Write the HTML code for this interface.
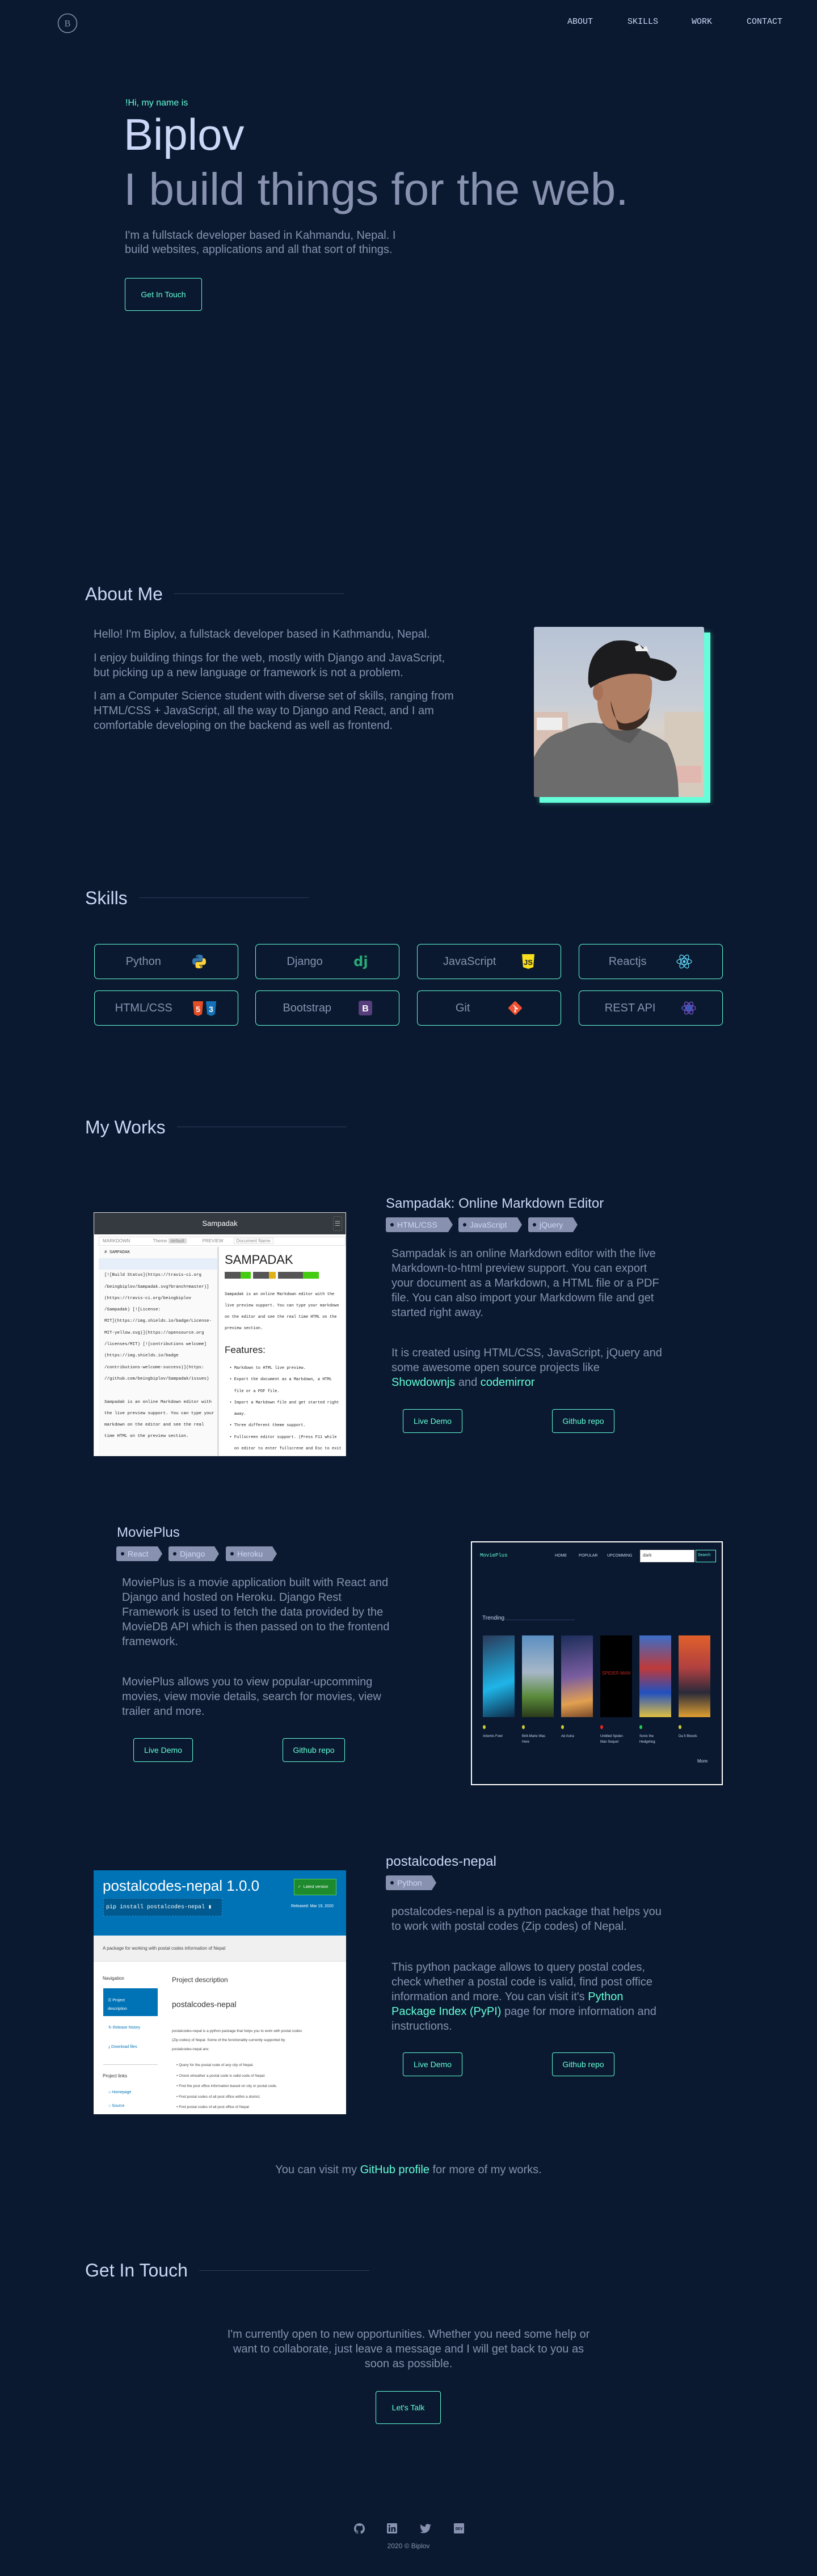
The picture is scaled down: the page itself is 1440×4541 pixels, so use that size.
<!DOCTYPE html>
<html><head><meta charset="utf-8">
<style>
*{margin:0;padding:0;box-sizing:border-box}
body{width:1440px;height:4541px;background:#0a192f;font-family:"Liberation Sans",Arial,sans-serif;color:#8892b0;position:relative;overflow:hidden}
.a{position:absolute;white-space:nowrap}
.nav{font-family:"Liberation Mono",monospace;font-size:15px;color:#ccd6f6;top:30px}
.h2{font-size:32px;color:#ccd6f6;line-height:40px}
.hl{position:absolute;height:1px;background:#2d3d5c}
.p{font-size:20px;line-height:26px;color:#8892b0}
.btn{position:absolute;border:1px solid #64ffda;border-radius:4px;color:#64ffda;font-size:14px;display:flex;align-items:center;justify-content:center}
.card{position:absolute;width:254px;height:62px;border:1px solid #64ffda;border-radius:7px;display:flex;align-items:center;justify-content:space-evenly;font-size:20px;color:#8892b0}
.title{font-size:24px;color:#ccd6f6;line-height:30px}
.tag{position:absolute;height:26px;background:#8892b0;color:#ccd6f6;font-size:14px;line-height:26px;padding-left:20px;border-radius:3px 0 0 3px;clip-path:polygon(0 0,calc(100% - 8px) 0,100% 50%,calc(100% - 8px) 100%,0 100%)}
.tag:before{content:"";position:absolute;left:8px;top:10px;width:6px;height:6px;border-radius:50%;background:#0a192f}
.lk{color:#64ffda}
.mono{font-family:"Liberation Mono",monospace}
</style></head><body>

<!-- NAV -->
<svg class="a" style="left:101px;top:23px" width="36" height="36" viewBox="0 0 36 36"><circle cx="18" cy="18" r="16.5" fill="none" stroke="#8892b0" stroke-width="1.5"/><text x="18" y="23.5" text-anchor="middle" font-family="Liberation Serif,serif" font-size="16" fill="#8892b0">B</text></svg>
<div class="a nav" style="left:1000px">ABOUT</div>
<div class="a nav" style="left:1106px">SKILLS</div>
<div class="a nav" style="left:1219px">WORK</div>
<div class="a nav" style="left:1316px">CONTACT</div>

<!-- HERO -->
<div class="a" style="left:221px;top:172px;font-size:16px;color:#64ffda;line-height:20px">!Hi, my name is</div>
<div class="a" style="left:218px;top:198px;font-size:78px;line-height:78px;color:#ccd6f6">Biplov</div>
<div class="a" style="left:218px;top:294px;font-size:80px;line-height:80px;color:#8892b0">I build things for the web.</div>
<div class="a p" style="left:220px;top:403px;line-height:25px">I'm a fullstack developer based in Kahmandu, Nepal. I<br>build websites, applications and all that sort of things.</div>
<div class="btn" style="left:220px;top:490px;width:136px;height:58px">Get In Touch</div>

<!-- ABOUT -->
<div class="a h2" style="left:150px;top:1027px">About Me</div>
<div class="hl" style="left:307px;top:1046px;width:299px"></div>
<div class="a p" style="left:165px;top:1105px">Hello! I'm Biplov, a fullstack developer based in Kathmandu, Nepal.</div>
<div class="a p" style="left:165px;top:1147px">I enjoy building things for the web, mostly with Django and JavaScript,<br>but picking up a new language or framework is not a problem.</div>
<div class="a p" style="left:165px;top:1214px">I am a Computer Science student with diverse set of skills, ranging from<br>HTML/CSS + JavaScript, all the way to Django and React, and I am<br>comfortable developing on the backend as well as frontend.</div>
<div class="a" style="left:951px;top:1115px;width:301px;height:300px;background:#64ffda;box-shadow:0 0 8px rgba(100,255,218,.5)"></div>
<svg class="a" style="left:941px;top:1105px;border-radius:3px" width="300" height="300" viewBox="0 0 300 300">
<defs><linearGradient id="sky" x1="0" y1="0" x2="0" y2="1"><stop offset="0" stop-color="#b7c3d6"/><stop offset=".45" stop-color="#c9ced6"/><stop offset=".6" stop-color="#d8d2cc"/><stop offset="1" stop-color="#c8b8ae"/></linearGradient></defs>
<rect width="300" height="300" fill="url(#sky)"/>
<rect x="0" y="150" width="60" height="80" fill="#d8c0b4"/><rect x="5" y="160" width="45" height="22" fill="#eeeeee"/>
<rect x="230" y="150" width="70" height="150" fill="#d6cabd"/><rect x="245" y="245" width="50" height="30" fill="#e0b8b0"/>
<path d="M0 300 L0 230 Q20 190 50 185 Q90 165 115 170 L160 175 Q200 180 235 205 Q255 240 255 300 Z" fill="#6c6c6c"/>
<path d="M120 170 Q140 200 170 205 L190 180 Z" fill="#5a5a5a"/>
<path d="M112 120 Q110 170 135 180 Q170 190 195 160 Q210 135 208 95 L200 80 L120 80 Z" fill="#b07e62"/>
<path d="M135 130 Q140 175 165 170 Q195 165 205 140 L200 160 Q180 190 150 180 Z" fill="#3a2a22"/>
<ellipse cx="113" cy="115" rx="9" ry="15" fill="#a87258"/>
<path d="M96 100 Q92 40 140 25 Q190 18 205 55 Q240 60 252 78 Q250 98 225 95 L200 85 Q150 75 100 108 Z" fill="#1c1c1e"/>
<path d="M178 35 l8 -4 l6 8 l6 -6 l4 10 l-22 0z" fill="#eee"/>
</svg>

<!-- SKILLS -->
<div class="a h2" style="left:150px;top:1563px">Skills</div>
<div class="hl" style="left:245px;top:1582px;width:299px"></div>

<div class="card" style="left:166px;top:1664px"><span>Python</span>
<svg width="26" height="26" viewBox="0 0 26 26"><path d="M12.8 1C7 1 7.4 3.5 7.4 3.5V6h5.6v1H5.2S1 6.6 1 12.8s3.6 6 3.6 6h2.2V16s-.1-3.6 3.6-3.6h5.5s3.4.1 3.4-3.3V3.6S19.8 1 12.8 1zM9.7 2.8a1 1 0 110 2 1 1 0 010-2z" fill="#3776ab"/><path d="M13.2 25c5.8 0 5.4-2.5 5.4-2.5V20H13v-1h7.8s4.2.4 4.2-5.8-3.6-6-3.6-6h-2.2V10s.1 3.6-3.6 3.6H10s-3.4-.1-3.4 3.3v5.5S6.2 25 13.2 25zm3.1-1.8a1 1 0 110-2 1 1 0 010 2z" fill="#ffd43b"/></svg></div>
<div class="card" style="left:450px;top:1664px"><span>Django</span><span style="color:#2ba977;font-weight:bold;font-size:24px;font-family:'DejaVu Sans',sans-serif">dj</span></div>
<div class="card" style="left:735px;top:1664px"><span>JavaScript</span>
<svg width="24" height="28" viewBox="0 0 24 28"><path d="M1 1h22l-2 23-9 3-9-3z" fill="#f7df1e"/><text x="12" y="20" text-anchor="middle" font-family="Liberation Sans" font-weight="bold" font-size="13" fill="#222">JS</text></svg></div>
<div class="card" style="left:1020px;top:1664px"><span>Reactjs</span>
<svg width="30" height="30" viewBox="-15 -15 30 30"><g fill="none" stroke="#61dafb" stroke-width="1.3"><ellipse rx="13" ry="5"/><ellipse rx="13" ry="5" transform="rotate(60)"/><ellipse rx="13" ry="5" transform="rotate(120)"/></g><circle r="2.4" fill="#61dafb"/></svg></div>

<div class="card" style="left:166px;top:1746px"><span>HTML/CSS</span>
<svg width="44" height="30" viewBox="0 0 44 30"><path d="M1 3h18l-2 23-7 3-7-3z" fill="#e44d26"/><text x="10" y="22" text-anchor="middle" font-family="Liberation Sans" font-weight="bold" font-size="14" fill="#fff">5</text><path d="M24 3h18l-2 23-7 3-7-3z" fill="#1572b6"/><text x="33" y="22" text-anchor="middle" font-family="Liberation Sans" font-weight="bold" font-size="14" fill="#fff">3</text></svg></div>
<div class="card" style="left:450px;top:1746px"><span>Bootstrap</span>
<svg width="24" height="26" viewBox="0 0 24 26"><rect width="24" height="26" rx="4" fill="#563d7c"/><text x="12" y="19" text-anchor="middle" font-family="Liberation Sans" font-weight="bold" font-size="16" fill="#fff">B</text></svg></div>
<div class="card" style="left:735px;top:1746px"><span>Git</span>
<svg width="26" height="26" viewBox="0 0 26 26"><rect x="4" y="4" width="18" height="18" transform="rotate(45 13 13)" rx="2" fill="#f05133"/><path d="M10 8l6 6M13 11v8" stroke="#fff" stroke-width="1.5"/><circle cx="13" cy="19" r="1.6" fill="#fff"/><circle cx="16" cy="14" r="1.6" fill="#fff"/></svg></div>
<div class="card" style="left:1020px;top:1746px"><span>REST API</span>
<svg width="28" height="30" viewBox="-14 -15 28 30"><g fill="none" stroke="#6b4fc2" stroke-width="1.5"><ellipse rx="12" ry="5"/><ellipse rx="12" ry="5" transform="rotate(60)"/><ellipse rx="12" ry="5" transform="rotate(120)"/></g><circle r="5" fill="#3a57b4"/></svg></div>

<!-- WORKS -->
<div class="a h2" style="left:150px;top:1967px">My Works</div>
<div class="hl" style="left:312px;top:1986px;width:299px"></div>

<!-- Project 1 image -->
<div class="a" style="left:165px;top:2137px;width:445px;height:430px;background:#fff;overflow:hidden;border:1px solid #ddd">
 <div style="height:38px;background:#343a40;color:#fff;font-size:13px;text-align:center;line-height:38px;position:relative">Sampadak<span style="position:absolute;right:6px;top:6px;width:16px;height:26px;border:1px solid #555;border-radius:3px;color:#aaa;line-height:24px;font-size:12px">☰</span></div>
 <div style="position:absolute;top:42px;left:8px;right:0;height:16px;border:1px solid #ddd;font-size:8px;color:#888;line-height:14px"><span style="margin-left:6px">MARKDOWN</span><span style="margin-left:40px">Theme <span style="background:#ddd;padding:0 4px">default</span></span><span style="margin-left:28px">PREVIEW</span><span style="margin-left:18px;border:1px solid #ddd;padding:0 4px">Document Name</span></div>
 <div class="mono" style="position:absolute;top:60px;left:8px;width:212px;bottom:0;background:#fafafa;border-right:3px solid #ddd;font-size:7.5px;line-height:20.3px;color:#222;padding-left:10px;white-space:pre"># SAMPADAK
<span style="display:block;background:#e6eef9;margin-left:-10px;height:20px"></span>[![Build Status](https://travis-ci.org
/beingbiplov/Sampadak.svg?branch=master)]
(https://travis-ci.org/beingbiplov
/Sampadak) [![License:
MIT](https://img.shields.io/badge/License-
MIT-yellow.svg)](https://opensource.org
/licenses/MIT) [![contributions welcome]
(https://img.shields.io/badge
/contributions-welcome-success)](https:
//github.com/beingbiplov/Sampadak/issues)

Sampadak is an online Markdown editor with
the live preview support. You can type your
markdown on the editor and see the real
time HTML on the preview section.</div>
 <div style="position:absolute;top:60px;left:224px;right:4px;bottom:0;padding-left:6px;color:#222">
  <div style="font-size:22px;margin-top:10px;font-family:'Liberation Sans Narrow','Liberation Sans',sans-serif">SAMPADAK</div>
  <div style="margin-top:8px;height:12px;display:flex;gap:4px"><span style="width:46px;background:#555;border-right:18px solid #4c1"></span><span style="width:40px;background:#555;border-right:12px solid #dfb317"></span><span style="width:72px;background:#555;border-right:28px solid #4c1"></span></div>
  <div class="mono" style="font-size:7px;line-height:20px;margin-top:18px;white-space:pre">Sampadak is an online Markdown editor with the
live preview support. You can type your markdown
on the editor and see the real time HTML on the
preview section.</div>
  <div style="font-size:17px;margin-top:18px">Features:</div>
  <div class="mono" style="font-size:7px;line-height:20.3px;margin-top:12px;white-space:pre">  • Markdown to HTML live preview.
  • Export the document as a Markdown, a HTML
    file or a PDF file.
  • Import a Markdown file and get started right
    away.
  • Three different theme support.
  • Fullscreen editor support. (Press F11 while
    on editor to enter fullscrene and Esc to exit
    out)</div>
 </div>
</div>
<div class="a title" style="left:680px;top:2107px">Sampadak: Online Markdown Editor</div>
<div class="tag" style="left:680px;top:2146px;width:118px">HTML/CSS</div>
<div class="tag" style="left:808px;top:2146px;width:112px">JavaScript</div>
<div class="tag" style="left:931px;top:2146px;width:87px">jQuery</div>
<div class="a p" style="left:690px;top:2197px">Sampadak is an online Markdown editor with the live<br>Markdown-to-html preview support. You can export<br>your document as a Markdown, a HTML file or a PDF<br>file. You can also import your Markdowm file and get<br>started right away.</div>
<div class="a p" style="left:690px;top:2372px">It is created using HTML/CSS, JavaScript, jQuery and<br>some awesome open source projects like<br><span class="lk">Showdownjs</span> and <span class="lk">codemirror</span></div>
<div class="btn" style="left:710px;top:2484px;width:105px;height:42px">Live Demo</div>
<div class="btn" style="left:973px;top:2484px;width:110px;height:42px">Github repo</div>

<!-- Project 2 -->
<div class="a title" style="left:206px;top:2687px">MoviePlus</div>
<div class="tag" style="left:205px;top:2726px;width:81px">React</div>
<div class="tag" style="left:297px;top:2726px;width:89px">Django</div>
<div class="tag" style="left:398px;top:2726px;width:90px">Heroku</div>
<div class="a p" style="left:215px;top:2777px">MoviePlus is a movie application built with React and<br>Django and hosted on Heroku. Django Rest<br>Framework is used to fetch the data provided by the<br>MovieDB API which is then passed on to the frontend<br>framework.</div>
<div class="a p" style="left:215px;top:2952px">MoviePlus allows you to view popular-upcomming<br>movies, view movie details, search for movies, view<br>trailer and more.</div>
<div class="btn" style="left:235px;top:3064px;width:105px;height:42px">Live Demo</div>
<div class="btn" style="left:498px;top:3064px;width:110px;height:42px">Github repo</div>
<div class="a" style="left:830px;top:2717px;width:444px;height:430px;background:#0a192f;border:2px solid #fff;overflow:hidden">
 <div class="a mono" style="left:14px;top:18px;font-size:9px;color:#64ffda">MoviePlus</div>
 <div class="a" style="left:146px;top:20px;font-size:7px;color:#ccd6f6">HOME</div>
 <div class="a" style="left:188px;top:20px;font-size:7px;color:#ccd6f6">POPULAR</div>
 <div class="a" style="left:238px;top:20px;font-size:7px;color:#ccd6f6">UPCOMMING</div>
 <div class="a" style="left:296px;top:13px;width:96px;height:22px;background:#fff;border:1px solid #ccc;font-size:8px;color:#444;padding:4px">dark</div>
 <div class="a" style="left:394px;top:13px;width:36px;height:22px;border:1px solid #64ffda;font-size:7px;color:#64ffda;padding:5px 3px">Search</div>
 <div class="a" style="left:18px;top:128px;font-size:10px;color:#ccd6f6">Trending</div>
 <div class="a" style="left:55px;top:136px;width:126px;height:1px;background:#2d3d5c"></div>
 <div class="a" style="left:19px;top:164px;width:56px;height:144px;background:linear-gradient(160deg,#2a3a5a,#1fb5e8 60%,#0d2a48)"></div>
 <div class="a" style="left:88px;top:164px;width:56px;height:144px;background:linear-gradient(180deg,#5b8fc2,#a7b7c8 45%,#5a8a3a 75%,#2a3a1a)"></div>
 <div class="a" style="left:157px;top:164px;width:56px;height:144px;background:linear-gradient(170deg,#1c2e5a,#7a5da0 50%,#e2a050 80%,#7a4a2a)"></div>
 <div class="a" style="left:226px;top:164px;width:56px;height:144px;background:#000"><div style="color:#c22;font-size:8px;text-align:center;margin-top:62px">SPIDER-MAN</div></div>
 <div class="a" style="left:295px;top:164px;width:56px;height:144px;background:linear-gradient(180deg,#3a6ec8,#c03a3a 40%,#2050c0 70%,#e0c040)"></div>
 <div class="a" style="left:364px;top:164px;width:56px;height:144px;background:linear-gradient(180deg,#e0602a,#b04040 40%,#2a2a3a 70%,#e0a030)"></div>
 <div class="a" style="left:19px;top:337px;font-size:6px;color:#ccd6f6;line-height:10px">Artemis Fowl</div>
 <div class="a" style="left:88px;top:337px;font-size:6px;color:#ccd6f6;line-height:10px">Britt-Marie Was<br>Here</div>
 <div class="a" style="left:157px;top:337px;font-size:6px;color:#ccd6f6;line-height:10px">Ad Astra</div>
 <div class="a" style="left:226px;top:337px;font-size:6px;color:#ccd6f6;line-height:10px">Untitled Spider-<br>Man Sequel</div>
 <div class="a" style="left:295px;top:337px;font-size:6px;color:#ccd6f6;line-height:10px">Sonic the<br>Hedgehog</div>
 <div class="a" style="left:364px;top:337px;font-size:6px;color:#ccd6f6;line-height:10px">Da 5 Bloods</div>
 <div class="a" style="left:19px;top:322px;width:5px;height:7px;border-radius:50%;background:#cc3"></div>
 <div class="a" style="left:88px;top:322px;width:5px;height:7px;border-radius:50%;background:#cc3"></div>
 <div class="a" style="left:157px;top:322px;width:5px;height:7px;border-radius:50%;background:#cc3"></div>
 <div class="a" style="left:226px;top:322px;width:5px;height:7px;border-radius:50%;background:#e22"></div>
 <div class="a" style="left:295px;top:322px;width:5px;height:7px;border-radius:50%;background:#2c5"></div>
 <div class="a" style="left:364px;top:322px;width:5px;height:7px;border-radius:50%;background:#cc3"></div>
 <div class="a" style="left:397px;top:381px;font-size:8px;color:#ccd6f6">More</div>
</div>

<!-- Project 3 -->
<div class="a" style="left:165px;top:3297px;width:445px;height:430px;background:#fff;overflow:hidden">
 <div style="height:115px;background:#0073b7;position:relative">
  <div class="a" style="left:16px;top:12px;font-size:26px;color:#fff;font-family:'Liberation Sans Narrow','Liberation Sans',sans-serif">postalcodes-nepal 1.0.0</div>
  <div class="a mono" style="left:17px;top:49px;width:210px;height:32px;background:#005a8f;border:1px dashed #2a8ac8;color:#fff;font-size:10px;padding:9px 4px">pip install postalcodes-nepal ▮</div>
  <div class="a" style="left:353px;top:15px;width:75px;height:29px;background:#1e8a2e;border:1px solid #5c5;color:#fff;font-size:7px;padding:9px 6px">✓ &nbsp;Latest version</div>
  <div class="a" style="left:348px;top:60px;font-size:7px;color:#fff">Released: Mar 19, 2020</div>
 </div>
 <div style="height:46px;background:#f0f0f0;font-size:8px;color:#444;padding:18px 16px;border-bottom:1px solid #ddd">A package for working with postal codes information of Nepal</div>
 <div class="a" style="left:16px;top:186px;font-size:8px;color:#333">Navigation</div>
 <div class="a" style="left:17px;top:208px;width:96px;height:49px;background:#0073b7;color:#fff;font-size:7px;padding:14px 8px;line-height:15px">☰ Project<br>description</div>
 <div class="a" style="left:26px;top:273px;font-size:7px;color:#0073b7">↻ Release history</div>
 <div class="a" style="left:26px;top:308px;font-size:7px;color:#0073b7">⤓ Download files</div>
 <div class="a" style="left:17px;top:342px;width:96px;height:1px;background:#ccc"></div>
 <div class="a" style="left:16px;top:358px;font-size:8px;color:#333">Project links</div>
 <div class="a" style="left:26px;top:388px;font-size:7px;color:#0073b7">⌂ Homepage</div>
 <div class="a" style="left:26px;top:412px;font-size:7px;color:#0073b7">○ Source</div>
 <div class="a" style="left:138px;top:186px;font-size:12px;color:#333">Project description</div>
 <div class="a" style="left:138px;top:228px;font-size:14px;color:#333">postalcodes-nepal</div>
 <div class="a" style="left:138px;top:276px;font-size:6.5px;color:#444;line-height:16px">postalcodes-nepal is a python package that helps you to work with postal codes<br>(Zip codes) of Nepal. Some of the functionality currently supported by<br>postalcodes-nepal are:</div>
 <div class="a" style="left:146px;top:335px;font-size:6.5px;color:#444;line-height:18.6px">• Query for the postal code of any city of Nepal.<br>• Check wheather a postal code is valid code of Nepal.<br>• Find the post office information based on city or postal code.<br>• Find postal codes of all post office within a district.<br>• Find postal codes of all post office of Nepal</div>
</div>
<div class="a title" style="left:680px;top:3267px">postalcodes-nepal</div>
<div class="tag" style="left:680px;top:3306px;width:89px">Python</div>
<div class="a p" style="left:690px;top:3357px">postalcodes-nepal is a python package that helps you<br>to work with postal codes (Zip codes) of Nepal.</div>
<div class="a p" style="left:690px;top:3455px">This python package allows to query postal codes,<br>check whether a postal code is valid, find post office<br>information and more. You can visit it's <span class="lk">Python</span><br><span class="lk">Package Index (PyPI)</span> page for more information and<br>instructions.</div>
<div class="btn" style="left:710px;top:3618px;width:105px;height:42px">Live Demo</div>
<div class="btn" style="left:973px;top:3618px;width:110px;height:42px">Github repo</div>

<div class="a p" style="left:0;width:1440px;text-align:center;top:3812px">You can visit my <span class="lk">GitHub profile</span> for more of my works.</div>

<!-- CONTACT -->
<div class="a h2" style="left:150px;top:3982px">Get In Touch</div>
<div class="hl" style="left:351px;top:4002px;width:300px"></div>
<div class="a p" style="left:0;width:1440px;text-align:center;top:4102px">I'm currently open to new opportunities. Whether you need some help or<br>want to collaborate, just leave a message and I will get back to you as<br>soon as possible.</div>
<div class="btn" style="left:662px;top:4215px;width:115px;height:58px">Let's Talk</div>

<!-- FOOTER -->
<svg class="a" style="left:624px;top:4448px" width="19" height="19" viewBox="0 0 16 16"><path fill="#8892b0" d="M8 0C3.580 0 0 3.58 0 8c0 3.54 2.29 6.53 5.47 7.590.4.07.55-.17.55-.38v-1.33c-2.23.48-2.7-1.07-2.7-1.07-.36-.92-.89-1.170-.89-1.17-.73-.5.06-.49.06-.49.8.06 1.23.83 1.23.83.72 1.22 1.87.87 2.33.66.07-.52.28-.87.5-1.07-1.78-.2-3.64-.89-3.64-3.95 0-.87.31-1.59.82-2.15-.08-.2-.36-1.02.08-2.12 0 0 .67-.21 2.2.82a7.6 7.6 0 014 0c1.53-1.04 2.2-.82 2.2-.82.44 1.1.16 1.92.08 2.12.51.56.82 1.27.82 2.15 0 3.07-1.87 3.75-3.65 3.95.29.25.54.73.54 1.48v2.2c0 .21.15.46.55.38A8.010 8.010 0 0016 8c0-4.42-3.58-8-8-8z"/></svg>
<svg class="a" style="left:682px;top:4448px" width="18" height="18" viewBox="0 0 18 18"><rect width="18" height="18" rx="1.5" fill="#8892b0"/><rect x="3" y="7" width="2.6" height="8" fill="#0a192f"/><circle cx="4.3" cy="4.3" r="1.5" fill="#0a192f"/><path d="M7.5 7h2.5v1.2c.5-.9 1.5-1.4 2.6-1.4 2 0 2.6 1.3 2.6 3.2V15h-2.6v-4.4c0-1-.3-1.7-1.2-1.7-1 0-1.4.8-1.4 1.7V15H7.5z" fill="#0a192f"/></svg>
<svg class="a" style="left:740px;top:4449px" width="20" height="17" viewBox="0 0 24 20"><path fill="#8892b0" d="M24 2.4a9.8 9.8 0 01-2.8.8A4.9 4.9 0 0023.3.5a9.9 9.9 0 01-3.1 1.2A4.9 4.9 0 0011.8 6 14 14 0 011.7.9a4.9 4.9 0 001.5 6.6A4.9 4.9 0 01.9 6.9v.1a4.9 4.9 0 004 4.8 4.9 4.9 0 01-2.2.1 4.9 4.9 0 004.6 3.4A9.9 9.9 0 010 17.3 14 14 0 007.5 19.5c9.1 0 14-7.5 14-14v-.6A10 10 0 0024 2.4z"/></svg>
<svg class="a" style="left:800px;top:4448px" width="18" height="18" viewBox="0 0 18 18"><rect width="18" height="18" rx="1.5" fill="#8892b0"/><text x="9" y="12" text-anchor="middle" font-family="Liberation Mono" font-weight="bold" font-size="7" fill="#0a192f">DEV</text></svg>
<div class="a" style="left:0;width:1440px;text-align:center;top:4481px;font-size:12px;color:#8892b0">2020 © Biplov</div>

</body></html>
